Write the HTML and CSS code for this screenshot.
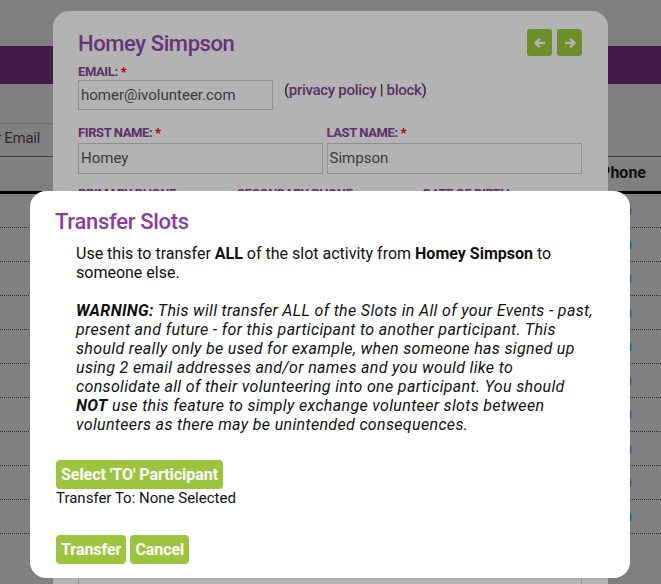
FILE: index.html
```html
<!DOCTYPE html>
<html>
	<head>
		<meta charset="UTF-8">
		<title>Transfer Slots</title>
		<link rel="stylesheet" href="styles.css">
	</head>
	<body>
		<!-- page behind both dialogs (already dimmed) -->
		<div class="page">
			<div class="topbar"></div>
			<div class="tools">
				<span class="search">or Email</span>
			</div>
			<div class="thead"><span class="col-phone">Phone</span></div>
			<div class="rows">
				<div class="row"><span class="mail">m</span></div>
				<div class="row"><span class="mail">m</span></div>
				<div class="row"><span class="mail">m</span></div>
				<div class="row"><span class="mail">m</span></div>
				<div class="row"><span class="mail">m</span></div>
				<div class="row"><span class="mail">m</span></div>
				<div class="row"><span class="mail">m</span></div>
				<div class="row"><span class="mail">m</span></div>
				<div class="row"><span class="mail">m</span></div>
				<div class="row"><span class="mail">m</span></div>
				<div class="row last"><span class="num">212</span></div>
			</div>
		</div>

		<!-- participant dialog (dimmed) -->
		<div class="dialog-back">
			<div class="back-head">
				<h2>Homey Simpson</h2>
				<div class="arrows">
					<span class="arrow"><svg width="14" height="14" viewBox="0 0 14 14"><path d="M12 7H3M7 2.5L2.5 7 7 11.5" fill="none" stroke="#b3b3b3" stroke-width="2.4"/></svg></span>
					<span class="arrow"><svg width="14" height="14" viewBox="0 0 14 14"><path d="M2 7h9M7 2.5L11.5 7 7 11.5" fill="none" stroke="#b3b3b3" stroke-width="2.4"/></svg></span>
				</div>
			</div>
			<label class="lbl">Email: <b>*</b></label>
			<div class="email-row">
				<div class="field email">homer@ivolunteer.com</div>
				<span class="links">(<a>privacy policy</a> | <a>block</a>)</span>
			</div>
			<div class="name-row">
				<div class="col first">
					<label class="lbl">First Name: <b>*</b></label>
					<div class="field">Homey</div>
				</div>
				<div class="col last">
					<label class="lbl">Last Name: <b>*</b></label>
					<div class="field">Simpson</div>
				</div>
			</div>
			<div class="phone-row">
				<label class="lbl">Primary Phone</label>
				<label class="lbl">Secondary Phone</label>
				<label class="lbl">Date of Birth</label>
			</div>
			<div class="more">
				<div class="field wide"></div>
			</div>
		</div>

		<!-- transfer dialog -->
		<div class="dialog">
			<h3>Transfer Slots</h3>
			<p class="text">
				Use this to transfer <b>ALL</b> of the slot activity from <b>Homey Simpson</b> to someone else.<br><br>
				<i><b>WARNING:</b> This will transfer ALL of the Slots in All of your Events - past, present and future - for this participant to another participant. This should really only be used for example, when someone has signed up using 2 email addresses and/or names and you would like to consolidate all of their volunteering into one participant. You should <b>NOT</b> use this feature to simply exchange volunteer slots between volunteers as there may be unintended consequences.</i>
			</p>
			<span class="btn">Select 'TO' Participant</span>
			<div class="to">Transfer To: None Selected</div>
			<div class="actions">
				<span class="btn">Transfer</span>
				<span class="btn">Cancel</span>
			</div>
		</div>
	</body>
</html>
```

FILE: styles.css
```css
body{
	margin: 0;
	width: 661px;
	height: 584px;
	overflow: hidden;
	background: #808080;
	font-family: Roboto, "Liberation Sans", sans-serif;
	position: relative;
}

/* page behind */
.page{
	padding-top: 46px;
}
.topbar{
	height: 38px;
	background: #441a4b;
}
.tools{
	height: 73px;
	border-bottom: 1px solid #3c3c3c;
	box-sizing: border-box;
	padding-top: 39px;
}
.search{
	display: block;
	width: 120px;
	margin-left: -67px;
	height: 31px;
	box-sizing: border-box;
	border-top: 1px solid #707070;
	font: 15px/29px Roboto, sans-serif;
	letter-spacing: -0.3px;
	color: #2a2a2a;
	text-align: right;
	padding-right: 13px;
}
.thead{
	height: 34px;
	border-bottom: 3px solid #000;
	text-align: right;
}
.col-phone{
	display: inline-block;
	margin-right: 15px;
	font: bold 16px/32px Roboto, sans-serif;
	color: #111;
}
.row{
	height: 34px;
	border-bottom: 1px dotted #2a2a2a;
	box-sizing: border-box;
	text-align: right;
	padding-right: 29px;
}
.mail{
	font: 16px/32px Roboto, sans-serif;
	color: #1e4a7a;
}
.row.last{
	border-bottom: 0;
}
.num{
	font: 16px/24px Roboto, sans-serif;
	color: #222;
	padding-right: 10px;
}

/* participant dialog, dimmed */
.dialog-back{
	position: absolute;
	left: 53px;
	top: 11px;
	width: 555px;
	height: 620px;
	box-sizing: border-box;
	background: #b3b3b3;
	border-radius: 16px;
	padding: 16px 26px 0 25px;
}
.back-head{
	display: flex;
	justify-content: space-between;
	align-items: flex-start;
}
.back-head h2{
	margin: 2px 0 0;
	font: 500 22px/30px Roboto, sans-serif;
	color: #66327a;
	letter-spacing: -0.4px;
}
.arrows{
	display: flex;
	gap: 5px;
	margin-top: 2px;
}
.arrow{
	width: 25px;
	height: 27px;
	border-radius: 3px;
	background: #6e8e2b;
	display: flex;
	align-items: center;
	justify-content: center;
}
.lbl{
	display: block;
	font: bold 13px/16px Roboto, sans-serif;
	letter-spacing: -0.4px;
	text-transform: uppercase;
	color: #5e2e6a;
}
.lbl b{
	color: #b00000;
}
.dialog-back > .lbl{
	margin-top: 5px;
}
.email-row{
	display: flex;
	align-items: flex-start;
	gap: 11px;
}
.field{
	height: 30px;
	box-sizing: border-box;
	border: 1px solid #909090;
	font: 15px/28px Roboto, sans-serif;
	color: #3a3a3a;
	padding-left: 2px;
}
.email{
	width: 195px;
}
.links{
	margin-top: 1px;
	font: 15px/18px Roboto, sans-serif;
	color: #1a1a1a;
	letter-spacing: -0.3px;
}
.links a{
	color: #5e2e6a;
	font-weight: 500;
}
.name-row{
	display: flex;
	gap: 4px;
	margin-top: 15px;
}
.name-row .first{
	width: 245px;
}
.name-row .last{
	width: 256px;
}
.name-row .field{
	height: 31px;
	margin-top: 2px;
}
.phone-row{
	display: flex;
	margin-top: 12px;
}
.phone-row .lbl{
	width: 159px;
}
.phone-row .lbl:nth-of-type(2){
	width: 186px;
}
.more{
	margin-top: 370px;
}

/* transfer dialog */
.dialog{
	position: absolute;
	left: 30px;
	top: 191px;
	width: 600px;
	height: 387px;
	box-sizing: border-box;
	background: #fff;
	border-radius: 16px;
	padding: 18px 30px 0 25px;
}
.dialog h3{
	margin: 0;
	font: 500 22px/26px Roboto, sans-serif;
	color: #8b3c9c;
	letter-spacing: -0.3px;
}
.text{
	margin: 9px 0 0 21px;
	font: 16px/19px Roboto, sans-serif;
	color: #111;
}
.text i{
	letter-spacing: 0.34px;
}
.btn{
	display: inline-block;
	height: 29px;
	padding: 0 5px;
	border-radius: 4px;
	background: #9dc43f;
	color: #fff;
	font: bold 16px/29px Roboto, sans-serif;
	letter-spacing: -0.05px;
}
.dialog > .btn{
	margin-top: 26px;
	margin-left: 1px;
}
.to{
	font: 15px/18px Roboto, sans-serif;
	color: #111;
	margin-left: 1px;
}
.actions{
	display: flex;
	gap: 4px;
	margin: 28px 0 0 1px;
}
```
